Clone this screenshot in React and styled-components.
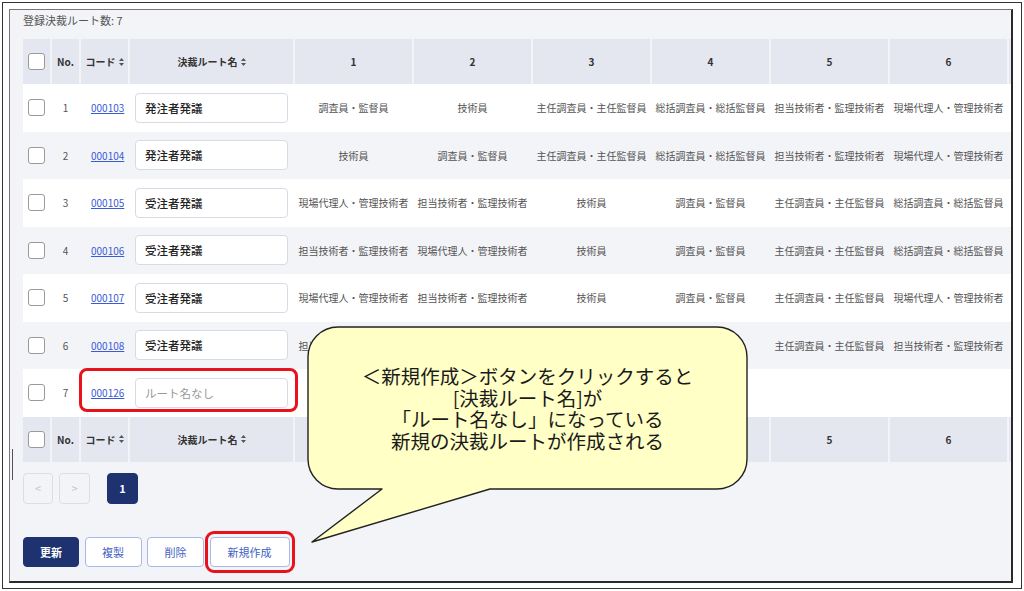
import React from "react";
import styled, { createGlobalStyle } from "styled-components";

const GlobalStyle = createGlobalStyle`
  html, body { margin: 0; padding: 0; background: #fff; }
  body { font-family: "Noto Sans CJK JP", "Noto Sans", sans-serif; }
  * { box-sizing: border-box; }
`;

const rows = [
  { no: 1, code: "000103", name: "発注者発議", steps: ["調査員・監督員", "技術員", "主任調査員・主任監督員", "総括調査員・総括監督員", "担当技術者・監理技術者", "現場代理人・管理技術者"] },
  { no: 2, code: "000104", name: "発注者発議", steps: ["技術員", "調査員・監督員", "主任調査員・主任監督員", "総括調査員・総括監督員", "担当技術者・監理技術者", "現場代理人・管理技術者"] },
  { no: 3, code: "000105", name: "受注者発議", steps: ["現場代理人・管理技術者", "担当技術者・監理技術者", "技術員", "調査員・監督員", "主任調査員・主任監督員", "総括調査員・総括監督員"] },
  { no: 4, code: "000106", name: "受注者発議", steps: ["担当技術者・監理技術者", "現場代理人・管理技術者", "技術員", "調査員・監督員", "主任調査員・主任監督員", "総括調査員・総括監督員"] },
  { no: 5, code: "000107", name: "受注者発議", steps: ["現場代理人・管理技術者", "担当技術者・監理技術者", "技術員", "調査員・監督員", "主任調査員・主任監督員", "現場代理人・管理技術者"] },
  { no: 6, code: "000108", name: "受注者発議", steps: ["担当技術者・監理技術者", "", "", "", "主任調査員・主任監督員", "担当技術者・監理技術者"] },
  { no: 7, code: "000126", name: "", steps: [], isNew: true },
];

// 7th column is clipped by the panel edge; only its header background shows
const stepCols = [1, 2, 3, 4, 5, 6, 7];

function SortIcon() {
  return (
    <SortSvg width="5" height="8" viewBox="0 0 5 8">
      <path d="M2.5 0 L5 3 H0 Z" fill="#555" />
      <path d="M2.5 8 L5 5 H0 Z" fill="#555" />
    </SortSvg>
  );
}

function HeaderRow({ hideFrom = 7 }) {
  return (
    <Row $header>
      <HeadCell><Check /></HeadCell>
      <HeadCell>No.</HeadCell>
      <HeadCell>コード<SortIcon /></HeadCell>
      <HeadCell>決裁ルート名<SortIcon /></HeadCell>
      {stepCols.map((n) => (
        <HeadCell key={n}>{n < hideFrom ? n : ""}</HeadCell>
      ))}
    </Row>
  );
}

export default function App() {
  return (
    <>
      <GlobalStyle />
      <Frame>
        <Panel>
          <Title>登録決裁ルート数: 7</Title>
          <TableWrap>
            <HeaderRow />
            {rows.map((r, i) => (
              <Row key={r.no} $odd={i % 2 === 1}>
                <Cell><Check /></Cell>
                <Cell>{r.no}</Cell>
                <CodeCell><CodeLink>{r.code}</CodeLink></CodeCell>
                <NameCell>
                  <NameInput readOnly defaultValue={r.name} placeholder="ルート名なし" />
                </NameCell>
                {stepCols.map((n) => (
                  <Cell key={n}>{n < 7 ? r.steps[n - 1] || "" : ""}</Cell>
                ))}
                {r.isNew && <RowHighlight />}
              </Row>
            ))}
            <FooterHeader>
              <HeadCell><Check /></HeadCell>
              <HeadCell>No.</HeadCell>
              <HeadCell>コード<SortIcon /></HeadCell>
              <HeadCell>決裁ルート名<SortIcon /></HeadCell>
              {stepCols.map((n) => (
                <HeadCell key={n}>{n >= 5 && n < 7 ? n : ""}</HeadCell>
              ))}
            </FooterHeader>
          </TableWrap>

          <Pager>
            <PageBtn disabled>&lt;</PageBtn>
            <PageBtn disabled>&gt;</PageBtn>
            <PageBtn $active>1</PageBtn>
          </Pager>

          <Actions>
            <ActionBtn $primary style={{ width: 56 }}>更新</ActionBtn>
            <ActionBtn style={{ width: 57 }}>複製</ActionBtn>
            <ActionBtn style={{ width: 57 }}>削除</ActionBtn>
            <Marked>
              <ActionBtn style={{ width: 80 }}>新規作成</ActionBtn>
            </Marked>
          </Actions>

          <Bubble width="450" height="225" viewBox="0 0 450 225">
            <path
              d="M33 2 H412 A30 30 0 0 1 442 32 V134 A30 30 0 0 1 412 164 H185 L7 217 L77 164 H33 A30 30 0 0 1 3 134 V32 A30 30 0 0 1 33 2 Z"
              fill="#ffffc6"
              stroke="#222"
              strokeWidth="1.4"
              strokeLinejoin="round"
            />
          </Bubble>
          <BubbleText>
            ＜新規作成＞ボタンをクリックすると<br />
            [決裁ルート名]が<br />
            「ルート名なし」になっている<br />
            新規の決裁ルートが作成される
          </BubbleText>
        </Panel>
      </Frame>
    </>
  );
}

const Frame = styled.div`
  margin: 2px;
  width: 1020px;
  height: 587px;
  border: 1px solid #333;
  padding: 6px;
`;

const Panel = styled.div`
  position: relative;
  width: 1004px;
  height: 574px;
  background: #f3f4f8;
  border-top: 1px solid #777;
  border-left: 1px solid #777;
  border-right: 2px solid #2a2a2a;
  border-bottom: 2px solid #2a2a2a;
  padding: 0 0 0 13px;
  overflow: hidden;

  &::before {
    content: "";
    position: absolute;
    left: 2px;
    top: 439px;
    width: 1px;
    height: 31px;
    background: #555;
  }
`;

const Title = styled.div`
  height: 20px;
  line-height: 20px;
  margin-bottom: 9px;
  font-size: 11px;
  color: #555;
`;

const TableWrap = styled.div`
  width: 100%;
  overflow: hidden;
`;

const Row = styled.div`
  position: relative;
  display: grid;
  grid-template-columns: 27px 27px 47px 163px repeat(7, 117px);
  column-gap: 2px;
  width: max-content;
  height: ${({ $header }) => ($header ? "45px" : "47.5px")};
  background: ${({ $header, $odd }) => ($header || $odd ? "#f3f4f8" : "#ffffff")};
`;

const FooterHeader = styled(Row).attrs({ $header: true })``;

const Cell = styled.div`
  display: flex;
  align-items: center;
  justify-content: center;
  white-space: nowrap;
  overflow: hidden;
  font-size: 10px;
  color: #555;
`;

const HeadCell = styled(Cell)`
  background: #e4e7ef;
  font-weight: 700;
  color: #333;
`;

const CodeCell = styled(Cell)`
  justify-content: flex-start;
  padding-left: 10px;
`;

const NameCell = styled(Cell)`
  padding: 0 5px;
`;

const Check = styled.span`
  display: block;
  width: 17px;
  height: 17px;
  background: #fff;
  border: 1px solid #9a9a9a;
  border-radius: 3px;
`;

const SortSvg = styled.svg`
  margin-left: 3px;
  flex: none;
`;

const CodeLink = styled.a`
  color: #3b5bd6;
  text-decoration: underline;
  font-size: 10px;
  cursor: pointer;
`;

const NameInput = styled.input`
  width: 100%;
  height: 30px;
  border: 1px solid #d8dbe3;
  border-radius: 4px;
  background: #fff;
  padding: 0 9px;
  font-family: "Noto Sans CJK JP", sans-serif;
  font-size: 11.5px;
  font-weight: 500;
  color: #222;
  outline: none;

  &::placeholder {
    color: #999;
    font-weight: 400;
  }
`;

const RowHighlight = styled.div`
  position: absolute;
  left: 56px;
  top: -1px;
  width: 219px;
  height: 44px;
  border: 3px solid #e8121c;
  border-radius: 8px;
  pointer-events: none;
`;

const Pager = styled.div`
  display: flex;
  gap: 6px;
  margin-top: 11px;
  height: 31px;

  & > :nth-child(3) {
    margin-left: 11px;
  }
`;

const PageBtn = styled.button`
  width: 31px;
  height: 31px;
  border-radius: 4px;
  border: 1px solid ${({ $active }) => ($active ? "#1e3270" : "#dcdee4")};
  background: ${({ $active }) => ($active ? "#1e3270" : "#f3f4f8")};
  color: ${({ $active }) => ($active ? "#fff" : "#c2c4cb")};
  font-family: "Noto Sans CJK JP", sans-serif;
  font-size: 11px;
  font-weight: ${({ $active }) => ($active ? 700 : 400)};
  padding: 0;

  &:first-child {
    width: 30px;
  }
  &:nth-child(3) {
    margin-left: 11px;
  }
`;

const Actions = styled.div`
  display: flex;
  gap: 5.5px;
  margin-top: 33.5px;
  height: 30px;
`;

const ActionBtn = styled.button`
  height: 30px;
  border-radius: 4px;
  border: 1px solid ${({ $primary }) => ($primary ? "#1e3270" : "#a8b8ee")};
  background: ${({ $primary }) => ($primary ? "#1e3270" : "#fff")};
  color: ${({ $primary }) => ($primary ? "#fff" : "#4461c4")};
  font-family: "Noto Sans CJK JP", sans-serif;
  font-size: 11px;
  font-weight: ${({ $primary }) => ($primary ? 700 : 400)};
  padding: 0;
`;

const Marked = styled.span`
  position: relative;
  display: inline-flex;

  &::after {
    content: "";
    position: absolute;
    inset: -6px -5px;
    border: 3px solid #e8121c;
    border-radius: 9px;
    pointer-events: none;
  }
`;

const Bubble = styled.svg`
  position: absolute;
  left: 295px;
  top: 315px;
`;

const BubbleText = styled.div`
  position: absolute;
  left: 298px;
  top: 317px;
  width: 439px;
  height: 162px;
  display: flex;
  align-items: center;
  justify-content: center;
  text-align: center;
  font-family: "Noto Sans CJK JP", sans-serif;
  font-size: 19.5px;
  line-height: 21.5px;
  color: #1a1a1a;
`;
